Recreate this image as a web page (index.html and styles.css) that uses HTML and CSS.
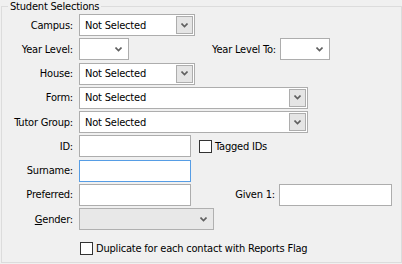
FILE: index.html
```html
<!DOCTYPE html>
<html lang="en">
<head>
  <meta charset="UTF-8">
  <title>Student Selections</title>
  <link rel="stylesheet" href="styles.css">
</head>
<body>
  <fieldset class="group">
    <legend>Student Selections</legend>

    <div class="rows">
      <div class="row">
        <label class="lbl">Campus:</label>
        <div class="combo w-short"><span class="value">Not Selected</span><span class="drop"><svg width="7" height="5" viewBox="0 0 7 5"><polyline points="0.5,0.5 3.5,3.5 6.5,0.5"/></svg></span></div>
      </div>

      <div class="row">
        <label class="lbl">Year Level:</label>
        <div class="combo w-tiny flat"><span class="value"></span><span class="drop"><svg width="7" height="5" viewBox="0 0 7 5"><polyline points="0.5,0.5 3.5,3.5 6.5,0.5"/></svg></span></div>
        <label class="lbl-right after-combo">Year Level To:</label>
        <div class="combo w-tiny flat"><span class="value"></span><span class="drop"><svg width="7" height="5" viewBox="0 0 7 5"><polyline points="0.5,0.5 3.5,3.5 6.5,0.5"/></svg></span></div>
      </div>

      <div class="row">
        <label class="lbl">House:</label>
        <div class="combo w-short"><span class="value">Not Selected</span><span class="drop"><svg width="7" height="5" viewBox="0 0 7 5"><polyline points="0.5,0.5 3.5,3.5 6.5,0.5"/></svg></span></div>
      </div>

      <div class="row">
        <label class="lbl">Form:</label>
        <div class="combo w-long"><span class="value">Not Selected</span><span class="drop"><svg width="7" height="5" viewBox="0 0 7 5"><polyline points="0.5,0.5 3.5,3.5 6.5,0.5"/></svg></span></div>
      </div>

      <div class="row">
        <label class="lbl">Tutor Group:</label>
        <div class="combo w-long"><span class="value">Not Selected</span><span class="drop"><svg width="7" height="5" viewBox="0 0 7 5"><polyline points="0.5,0.5 3.5,3.5 6.5,0.5"/></svg></span></div>
      </div>

      <div class="row">
        <label class="lbl">ID:</label>
        <input class="text" type="text">
        <label class="check tagged"><span class="box"></span>Tagged IDs</label>
      </div>

      <div class="row">
        <label class="lbl">Surname:</label>
        <input class="text focus" type="text">
      </div>

      <div class="row">
        <label class="lbl">Preferred:</label>
        <input class="text" type="text">
        <label class="lbl-right after-text">Given 1:</label>
        <input class="text wide" type="text">
      </div>

      <div class="row">
        <label class="lbl"><u>G</u>ender:</label>
        <div class="combo w-mid disabled"><span class="value"></span><span class="drop"><svg width="7" height="5" viewBox="0 0 7 5"><polyline points="0.5,0.5 3.5,3.5 6.5,0.5"/></svg></span></div>
      </div>
    </div>

    <label class="check duplicate"><span class="box"></span>Duplicate for each contact with Reports Flag</label>
  </fieldset>
</body>
</html>
```

FILE: styles.css
```css
body {
  margin: 0;
  background-color: #f0f0f0;
  font-family: "DejaVu Sans Condensed", "DejaVu Sans", sans-serif;
  font-size: 11px;
  letter-spacing: -0.2px;
  color: #000;
}
.group {
  box-sizing: border-box;
  height: 263px;
  margin: 0 0 0 1px;
  padding: 1px 0 0 0;
  border: 1px solid #dcdcdc;
}
.group legend {
  margin-left: 6px;
  padding: 0 2px;
  line-height: 13px;
}
.rows {
  display: flex;
  flex-direction: column;
  gap: 2.25px;
}
.row {
  display: flex;
  align-items: center;
  height: 22px;
}
.lbl {
  width: 71px;
  margin-right: 6px;
  text-align: right;
  white-space: nowrap;
}
.lbl-right {
  margin-right: 4px;
  text-align: right;
  white-space: nowrap;
}
.lbl-right.after-combo {
  width: 147px;
}
.lbl-right.after-text {
  width: 84px;
}

/* combo boxes */
.combo {
  box-sizing: border-box;
  display: flex;
  align-items: center;
  height: 22px;
  border: 1px solid #adadad;
  background-color: #fff;
}
.combo .value {
  flex: 1;
  padding-left: 5px;
}
.combo .drop {
  box-sizing: border-box;
  display: flex;
  align-items: center;
  justify-content: center;
  width: 17px;
  height: 18px;
  margin-right: 1px;
  border: 1px solid #adadad;
  background-color: #e5e5e5;
}
.combo svg polyline {
  fill: none;
  stroke: #606060;
  stroke-width: 1.6;
}
.combo.flat .drop {
  border: none;
  background: none;
  width: 17px;
}
.combo.disabled {
  background-color: #e8e8e8;
  border-color: #b0b0b0;
}
.combo.disabled .drop {
  border: none;
  background: none;
}
.w-short { width: 116px; }
.w-tiny { width: 50px; }
.w-long { width: 229px; }
.w-mid { width: 135px; }

/* text boxes */
.text {
  box-sizing: border-box;
  width: 112px;
  height: 22px;
  margin: 0;
  padding: 0 3px;
  border: 1px solid #adadad;
  background-color: #fff;
  font: inherit;
  outline: none;
}
.text.focus {
  border-color: #569de5;
}
.text.wide {
  width: 113px;
}

/* check boxes */
.check {
  display: flex;
  align-items: center;
  white-space: nowrap;
}
.check .box {
  box-sizing: border-box;
  width: 13px;
  height: 13px;
  margin-right: 3px;
  border: 1px solid #333;
  background-color: #fff;
}
.tagged {
  margin-left: 8px;
}
.duplicate {
  margin: 12px 0 0 78px;
}
```
